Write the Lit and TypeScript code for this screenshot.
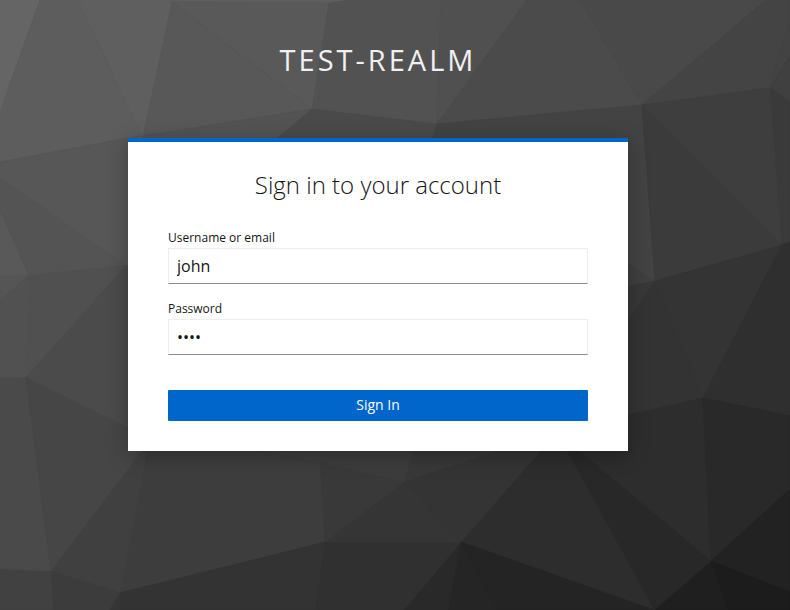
import { LitElement, html, svg, css } from "lit";
import { customElement } from "lit/decorators.js";

/** Facets of the backdrop: fill colour and outline. */
const facets: [string, string][] = [
  ["#656565", "0,0 40,0 0,112"],
  ["#5d5d5d", "40,0 78,0 143,138 128,138 0,162 0,112"],
  ["#5f5f5f", "78,0 168,0 172,2 143,138"],
  ["#5e5e5e", "168,0 350,0 329,3 172,2"],
  ["#585858", "172,2 312,109 143,136"],
  ["#595959", "172,2 329,3 312,109"],
  ["#525252", "329,3 350,0 441,0 437,124 312,109"],
  ["#505050", "441,0 527,0 437,124"],
  ["#4b4b4b", "527,0 580,0 642,105 437,124"],
  ["#494949", "580,0 766,0 642,105"],
  ["#444444", "766,0 790,0 790,20 770,88 642,105"],
  ["#434343", "790,20 790,55 770,88"],
  ["#404040", "790,55 790,102 770,88"],
  ["#535353", "143,136 312,109 277,140 128,160"],
  ["#4a4a4a", "312,109 437,124 430,160 240,170"],
  ["#434343", "437,124 642,105 655,281 620,258 420,180"],
  ["#3e3e3e", "642,105 770,88 782,245"],
  ["#3b3b3b", "642,105 782,245 655,281"],
  ["#3a3a3a", "770,88 790,102 790,242 782,245"],
  ["#343434", "655,281 782,245 703,398"],
  ["#2f2f2f", "782,245 790,242 790,416 703,398"],
  ["#3f3f3f", "620,258 655,281 620,288"],
  ["#383838", "620,288 655,281 620,333"],
  ["#333333", "655,281 703,398 620,417 620,333"],
  ["#2d2d2d", "620,417 703,398 711,561 566,440"],
  ["#292929", "703,398 790,416 790,489 711,561"],
  ["#222222", "711,561 790,489 790,592"],
  ["#1c1c1c", "711,561 790,592 790,610 728,610"],
  ["#1f1f1f", "711,561 728,610 654,610"],
  ["#282828", "561,440 566,440 711,561 654,610"],
  ["#2d2d2d", "550,440 561,440 654,610 461,542"],
  ["#242424", "461,542 654,610 497,610"],
  ["#252525", "461,542 497,610 448,610"],
  ["#292929", "461,542 448,610 404,610"],
  ["#303030", "325,542 461,542 404,610 316,610"],
  ["#353535", "404,482 461,542 325,542"],
  ["#343434", "404,482 530,440 550,440 461,542"],
  ["#383838", "404,482 416,440 530,440"],
  ["#3c3c3c", "321,440 416,440 404,482 320,463"],
  ["#393939", "320,463 404,482 325,542"],
  ["#3e3e3e", "200,440 321,440 320,463"],
  ["#3d3d3d", "150,440 200,440 320,463 325,542 120,593"],
  ["#333333", "120,593 325,542 316,610 120,610"],
  ["#363636", "120,593 120,610 109,610"],
  ["#404040", "51,571 150,440 120,593"],
  ["#3c3c3c", "51,571 120,593 109,610 53,610"],
  ["#414141", "0,569 51,571 53,610 0,610"],
  ["#4a4a4a", "0,378 26,377 51,571 0,569"],
  ["#464646", "26,377 140,433 150,440 51,571"],
  ["#4b4b4b", "26,377 126,265 140,260 140,433"],
  ["#505050", "29,275 126,265 26,377"],
  ["#515151", "0,300 29,275 26,377 0,378"],
  ["#555555", "0,276 29,275 0,300"],
  ["#595959", "0,210 29,275 0,276"],
  ["#545454", "0,178 126,265 29,275 0,210"],
  ["#575757", "0,162 140,136 140,265 126,265 0,178"],
];

@customElement("app-root")
export class AppRoot extends LitElement {
  static styles = css`
    :host {
      display: grid;
      width: 790px;
      height: 610px;
      overflow: hidden;
      background: #404040;
      font-family: "Open Sans", "Noto Sans", sans-serif;
      color: #151515;
    }
    .backdrop,
    .page {
      grid-area: 1 / 1;
      min-width: 0;
    }
    .backdrop {
      display: block;
    }
    .page {
      z-index: 1;
      display: flex;
      flex-direction: column;
      width: 500px;
      margin-left: 128px;
    }
    .realm {
      height: 98px;
      padding-top: 40px;
      color: #f0f0f0;
      font-size: 29px;
      line-height: 40px;
      letter-spacing: 3px;
      text-align: center;
      text-transform: uppercase;
    }
    .card {
      box-sizing: border-box;
      height: 313px;
      padding: 27px 40px 0;
      border-top: 4px solid #06c;
      background: #fff;
      box-shadow: 0 4px 20px rgba(3, 3, 3, 0.28);
    }
    .title {
      margin: 0 0 30px;
      font-size: 24px;
      font-weight: 300;
      line-height: 31px;
      text-align: center;
    }
    .label {
      display: block;
      height: 18px;
      font-size: 12px;
      line-height: 16px;
    }
    .field {
      display: block;
      box-sizing: border-box;
      width: 100%;
      height: 36px;
      margin: 0 0 17px;
      padding: 0 8px;
      border: 1px solid #ededed;
      border-bottom-color: #8a8d90;
      border-radius: 0;
      outline: 0;
      background: #fff;
      color: #151515;
      font: 16px "Open Sans", "Noto Sans", sans-serif;
    }
    .submit {
      display: block;
      width: 100%;
      height: 31px;
      margin-top: 35px;
      padding: 0 0 2px;
      border: 0;
      border-radius: 1px;
      background: #06c;
      color: #fff;
      font: 14px "Open Sans", "Noto Sans", sans-serif;
    }
  `;

  render() {
    return html`
      <svg class="backdrop" width="790" height="610" viewBox="0 0 790 610" aria-hidden="true">
        ${facets.map(
          ([fill, points]) =>
            svg`<polygon points=${points} fill=${fill} stroke=${fill} stroke-width="0.6"></polygon>`
        )}
      </svg>
      <main class="page">
        <header class="realm">test-realm</header>
        <section class="card">
          <h1 class="title">Sign in to your account</h1>
          <label class="label" for="username">Username or email</label>
          <input class="field" id="username" type="text" .value=${"john"} />
          <label class="label" for="password">Password</label>
          <input class="field" id="password" type="password" .value=${"john"} />
          <button class="submit" type="button">Sign In</button>
        </section>
      </main>
    `;
  }
}
